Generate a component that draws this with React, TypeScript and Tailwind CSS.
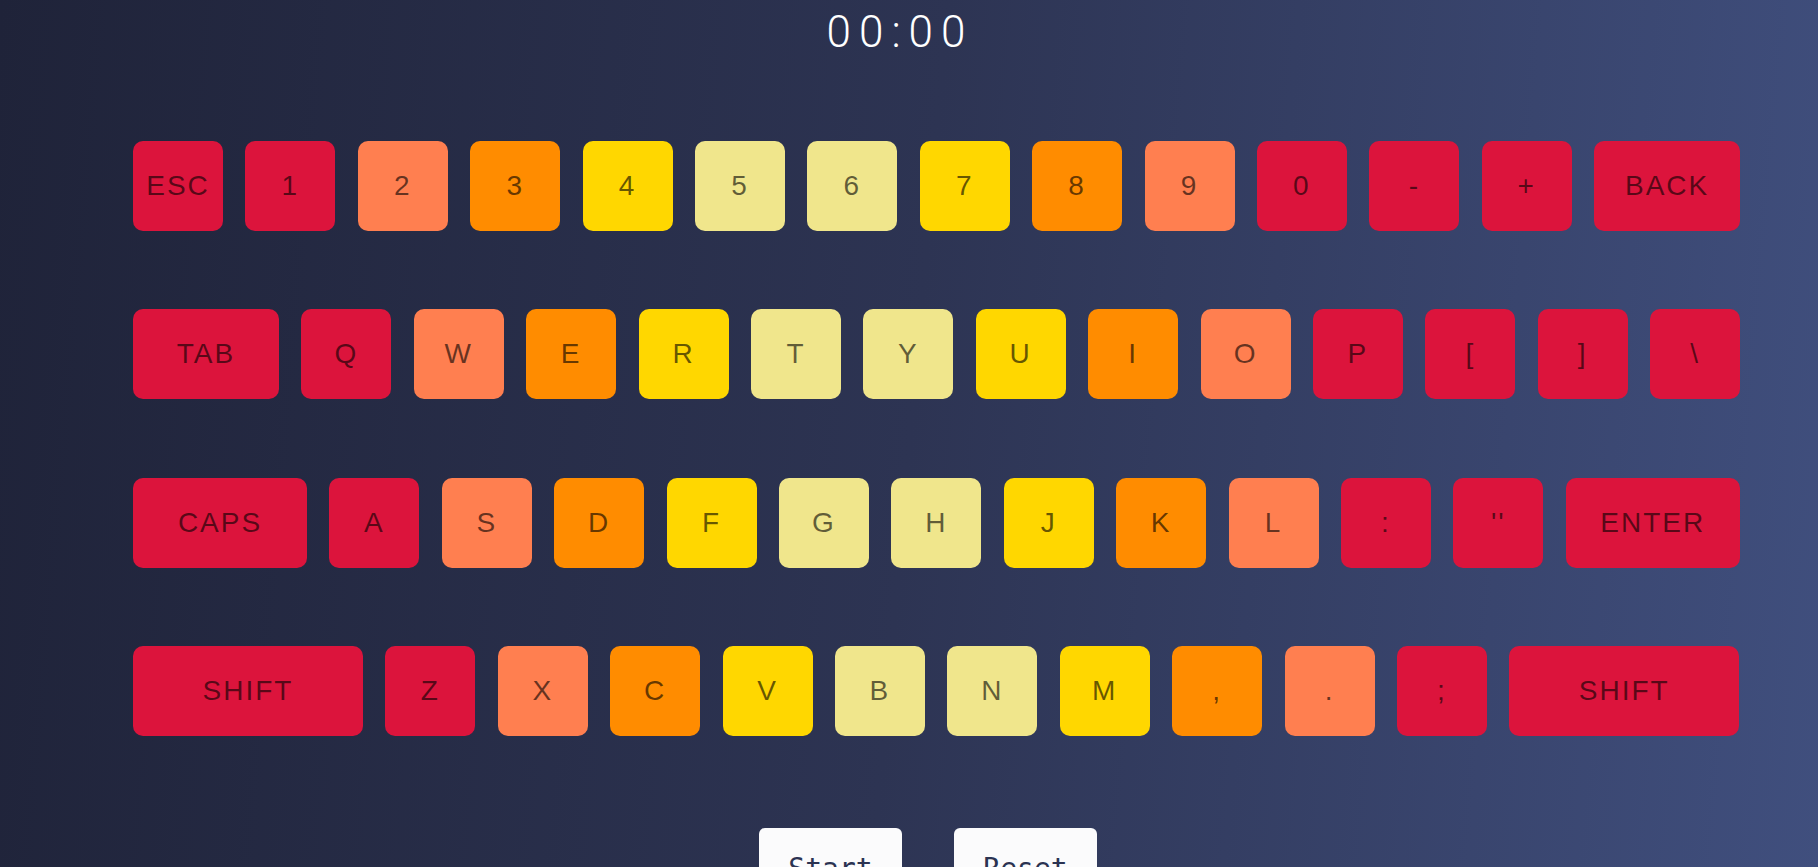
import React from 'react';

type Tone = 'red' | 'coral' | 'orange' | 'gold' | 'khaki';

const TONE_CLASSES: Record<Tone, string> = {
    red: 'bg-[#dc143c]',
    coral: 'bg-[#ff7f50]',
    orange: 'bg-[#ff8c00]',
    gold: 'bg-[#ffd700]',
    khaki: 'bg-[#f0e68c]',
};

interface KeyDef {
    label: string;
    tone: Tone;
    width?: string;
}

const middle: Tone[] = ['coral', 'orange', 'gold', 'khaki', 'khaki', 'gold', 'orange', 'coral'];

const makeRow = (labels: string[], first: KeyDef, last: KeyDef[]): KeyDef[] => [
    first,
    { label: labels[0], tone: 'red' },
    ...middle.map((tone, i) => ({ label: labels[i + 1], tone })),
    ...last,
];

const ROWS: KeyDef[][] = [
    makeRow(['1', '2', '3', '4', '5', '6', '7', '8', '9'], { label: 'ESC', tone: 'red' }, [
        { label: '0', tone: 'red' },
        { label: '-', tone: 'red' },
        { label: '+', tone: 'red' },
        { label: 'BACK', tone: 'red', width: 'w-[146px]' },
    ]),
    makeRow(['Q', 'W', 'E', 'R', 'T', 'Y', 'U', 'I', 'O'], { label: 'TAB', tone: 'red', width: 'w-[146px]' }, [
        { label: 'P', tone: 'red' },
        { label: '[', tone: 'red' },
        { label: ']', tone: 'red' },
        { label: '\\', tone: 'red' },
    ]),
    makeRow(['A', 'S', 'D', 'F', 'G', 'H', 'J', 'K', 'L'], { label: 'CAPS', tone: 'red', width: 'w-[174px]' }, [
        { label: ':', tone: 'red' },
        { label: "''", tone: 'red' },
        { label: 'ENTER', tone: 'red', width: 'w-[174px]' },
    ]),
    makeRow(['Z', 'X', 'C', 'V', 'B', 'N', 'M', ',', '.'], { label: 'SHIFT', tone: 'red', width: 'w-[230px]' }, [
        { label: ';', tone: 'red' },
        { label: 'SHIFT', tone: 'red', width: 'w-[230px]' },
    ]),
];

const Key: React.FC<{ k: KeyDef }> = ({ k }) => (
    <div
        className={`${k.width ?? 'w-[90px]'} ${TONE_CLASSES[k.tone]} h-[90px] shrink-0 rounded-[10px] flex items-center justify-center text-[28px] tracking-[2px] text-black/60`}
    >
        {k.label}
    </div>
);

const ControlButton: React.FC<{ label: string }> = ({ label }) => (
    <button
        type="button"
        className="w-[143px] h-[70px] rounded-[6px] bg-[#fbfbfc] text-[#2b3352] text-[28px] font-['DejaVu_Sans_Mono',monospace] flex items-start justify-center pt-[20px]"
    >
        {label}
    </button>
);

export default function App() {
    return (
        <div className="min-h-screen w-full overflow-hidden bg-[linear-gradient(95deg,#1f2339_0%,#2d3453_50%,#404f7e_100%)] font-['Liberation_Sans',Arial,sans-serif]">
            <div className="flex justify-center pt-[10px] pr-[18px]">
                <div className="font-['Roboto',sans-serif] font-light text-[44px] leading-none tracking-[8px] text-white">
                    00:00
                </div>
            </div>

            <div className="flex flex-col gap-y-[78.4px] pl-[133px] pt-[87px]">
                {ROWS.map((row, r) => (
                    <div key={r} className="flex gap-x-[22.4px]">
                        {row.map((k, i) => (
                            <Key key={i} k={k} />
                        ))}
                    </div>
                ))}
            </div>

            <div className="flex justify-center gap-[52px] pt-[92px] pl-[38px]">
                <ControlButton label="Start" />
                <ControlButton label="Reset" />
            </div>
        </div>
    );
}
